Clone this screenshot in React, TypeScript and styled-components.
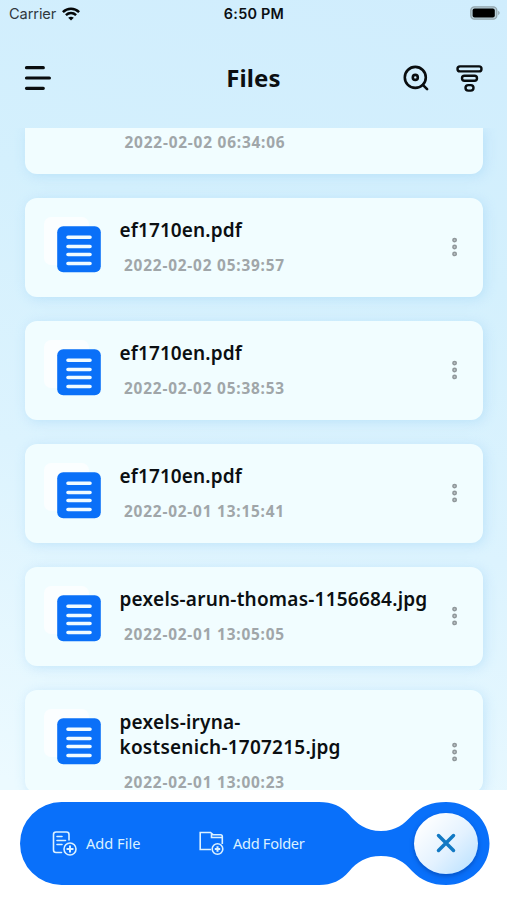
import React from "react";
import styled, { createGlobalStyle } from "styled-components";

const GlobalStyle = createGlobalStyle`
  * { box-sizing: border-box; }
  body { margin: 0; font-family: "Noto Sans", "Open Sans", sans-serif; color: #0b0f12; }
  button { border: 0; padding: 0; background: none; color: inherit; font: inherit; }
  svg { display: block; }
`;

const Screen = styled.div`
  width: 507px;
  height: 900px;
  display: flex;
  flex-direction: column;
  overflow: hidden;
  background: linear-gradient(194deg, #d0edfd 0%, #d4f0fd 28%, #dcf3fe 55%, #ecfaff 88%);
`;

const StatusBar = styled.div`
  height: 28px;
  flex: none;
  display: grid;
  grid-template-columns: 1fr auto 1fr;
  align-items: center;
  padding: 0 7px 0 9px;
  font-family: Inter, sans-serif;
  font-size: 14.6px;
  line-height: 28px;
`;

const Carrier = styled.div`
  display: flex;
  align-items: center;
  gap: 6px;
  margin-top: -1px;
  letter-spacing: -0.1px;
  color: #30383d;
`;

const Clock = styled.div`
  margin-left: -1px;
  font-weight: 600;
  font-size: 14.4px;
  letter-spacing: 0.25px;
`;

const BatterySlot = styled.div`
  display: flex;
  justify-content: flex-end;
  margin-top: -2px;
`;

const Header = styled.header`
  height: 100px;
  flex: none;
  display: grid;
  grid-template-columns: 1fr auto 1fr;
  align-items: center;
  padding: 0 24px 0 24px;
`;

const Title = styled.h1`
  margin: 0;
  font-size: 24px;
  font-weight: 700;
  line-height: 32px;
  letter-spacing: 0.1px;
`;

const Actions = styled.div`
  display: flex;
  justify-content: flex-end;
  gap: 27px;
`;

const List = styled.main`
  flex: none;
  height: 662px;
  overflow: hidden;
  padding: 0 24.5px 0 25px;
`;

const Rows = styled.div`
  display: flex;
  flex-direction: column;
  gap: 24.5px;
`;

const Card = styled.article<{ $partial?: boolean }>`
  flex: none;
  height: ${(p) => (p.$partial ? "45.5px" : "auto")};
  min-height: ${(p) => (p.$partial ? "0" : "98.5px")};
  display: flex;
  align-items: flex-start;
  padding: ${(p) => (p.$partial ? "4px 23px 0 95px" : "19px 23px 0 19px")};
  border-radius: ${(p) => (p.$partial ? "0 0 12px 12px" : "12px")};
  background: #f1fdff;
  box-shadow: 2px 2px 12px rgba(150, 208, 246, 0.42);
`;

const Details = styled.div`
  flex: 1;
  min-width: 0;
  margin: 1px 0 0 17.5px;
`;

const FileName = styled.div<{ $spacing: number }>`
  font-size: 19px;
  font-weight: 600;
  line-height: 25px;
  white-space: pre-line;
  letter-spacing: ${(p) => p.$spacing}px;
`;

const Stamp = styled.div`
  margin-left: 4.5px;
  font-size: 15.4px;
  font-weight: 700;
  line-height: 21px;
  letter-spacing: 0.8px;
  color: #a0a6a9;

  ${FileName} + & {
    margin-top: 12px;
  }
`;

const MoreButton = styled.button<{ $tall?: boolean }>`
  margin-top: ${(p) => (p.$tall ? 33 : 20)}px;
`;

const Footer = styled.footer`
  flex: 1;
  display: grid;
  padding: 12px 17px 15px 20px;
  background: #fff;
`;

const BarShape = styled.svg`
  grid-area: 1 / 1;
`;

const BarContent = styled.div`
  grid-area: 1 / 1;
  z-index: 1;
  height: 83px;
  display: flex;
  align-items: center;
  padding-left: 32px;
`;

const AddButton = styled.button<{ $width: number; $spacing: number }>`
  width: ${(p) => p.$width}px;
  flex: none;
  display: flex;
  align-items: center;
  gap: 8px;
  margin-top: -2px;
  color: #dcf1ff;
  font-size: 14.6px;
  line-height: 20px;
  letter-spacing: ${(p) => p.$spacing}px;
  white-space: nowrap;
`;

const CloseButton = styled.button`
  width: 64px;
  height: 61px;
  flex: none;
  display: grid;
  place-items: center;
  margin-left: -0.5px;
  margin-top: -1px;
  border-radius: 50%;
  background: linear-gradient(135deg, #ffffff 12%, #e4f2ff 55%, #b5dfff 100%);
  box-shadow: 0 2px 4px rgba(0, 50, 140, 0.5);
`;

const FileIcon = () => (
  <svg width="58" height="56" viewBox="0 0 58 56">
    <rect x="0" y="0" width="45" height="48" rx="7" fill="#fbfeff" />
    <rect x="13.2" y="9.2" width="43.6" height="46" rx="6" fill="#0a70f8" />
    <path d="M24 20.2h22M24 29.5h22M24 37.5h22M24 46.5h22" stroke="#f1fbff" strokeWidth="3.6" strokeLinecap="round" />
  </svg>
);

const MoreIcon = () => (
  <svg width="10" height="20" viewBox="0 0 10 20" fill="#bcc3c6" stroke="#8f979a" strokeWidth="1.5">
    <circle cx="4.6" cy="3.1" r="1.7" />
    <circle cx="4.6" cy="10" r="1.7" />
    <circle cx="4.6" cy="16.9" r="1.7" />
  </svg>
);

const files = [
  { name: "ef1710en.pdf", date: "2022-02-02 05:39:57", spacing: 0.12 },
  { name: "ef1710en.pdf", date: "2022-02-02 05:38:53", spacing: 0.12 },
  { name: "ef1710en.pdf", date: "2022-02-01 13:15:41", spacing: 0.12 },
  { name: "pexels-arun-thomas-1156684.jpg", date: "2022-02-01 13:05:05", spacing: 0.22 },
  { name: "pexels-iryna-\nkostsenich-1707215.jpg", date: "2022-02-01 13:00:23", spacing: 0.23, tall: true },
];

export default function App() {
  return (
    <>
      <GlobalStyle />
      <Screen>
        <StatusBar>
          <Carrier>
            Carrier
            <svg width="18" height="14" viewBox="0 0 18 14" fill="none" stroke="#050708" strokeWidth="2.5">
              <path d="M.9 5.2C5.5.7 12.5.7 17.1 5.2M3.9 8.2c3-2.8 7.2-2.8 10.2 0" />
              <path d="M9 13.6 6.2 10.8q2.8-2.2 5.6 0Z" fill="#050708" stroke="none" />
            </svg>
          </Carrier>
          <Clock>6:50 PM</Clock>
          <BatterySlot>
            <svg width="30" height="14" viewBox="0 0 30 14">
              <rect x=".8" y=".8" width="26" height="12.4" rx="3.6" fill="#b9d0da" stroke="#93a5ad" strokeWidth="1.3" />
              <rect x="2.6" y="2.4" width="22.2" height="9.2" rx="2" fill="#000" />
              <path d="M28.2 4.8q3 2.2 0 4.4Z" fill="#93a5ad" />
            </svg>
          </BatterySlot>
        </StatusBar>
        <Header>
          <svg width="27" height="26" viewBox="0 0 27 26" stroke="#090d0f" strokeWidth="3.2" strokeLinecap="round">
            <path d="M2.5 2.7H19.3M2.5 13H25.4M2.5 23.3H19.3" />
          </svg>
          <Title>Files</Title>
          <Actions>
            <svg width="26" height="26" viewBox="0 0 26 26" fill="none" stroke="#090d0f" strokeWidth="2.6" strokeLinecap="round">
              <circle cx="12.3" cy="12.4" r="10.5" />
              <circle cx="12.3" cy="12.4" r="2.5" />
              <path d="m19.8 19.9 4.3 4.2" />
            </svg>
            <svg width="27" height="27" viewBox="0 0 27 27" fill="none" stroke="#090d0f" strokeWidth="2.4">
              <rect x="1.5" y="1.4" width="24" height="5" rx="2.5" />
              <rect x="6" y="10.8" width="15" height="5" rx="2.5" />
              <rect x="9.5" y="20.1" width="8" height="5.5" rx="2.75" />
            </svg>
          </Actions>
        </Header>
        <List>
          <Rows>
            <Card $partial>
              <Stamp>2022-02-02 06:34:06</Stamp>
            </Card>
            {files.map((f) => (
              <Card key={f.date}>
                <FileIcon />
                <Details>
                  <FileName $spacing={f.spacing}>{f.name}</FileName>
                  <Stamp>{f.date}</Stamp>
                </Details>
                <MoreButton $tall={f.tall} aria-label="More"><MoreIcon /></MoreButton>
              </Card>
            ))}
          </Rows>
        </List>
        <Footer>
          <BarShape width="470" height="83" viewBox="0 0 470 83">
            <path
              fill="#0970fa"
              d="M41.5 0H299C312 0 321 4 329 12.5C337 22 346 29 361 29C376 29 384 22 392 13.5C401 4 412 0 426 0C450 0 469.5 18 469.5 41.5C469.5 65 450 83 426 83C412 83 401 78.5 392 69C384 60 376 54 361 54C346 54 337 60 329 69.5C321 78.5 312 83 299 83H41.5A41.5 41.5 0 0 1 41.5 0Z"
            />
          </BarShape>
          <BarContent>
            <AddButton $width={147} $spacing={0}>
              <svg width="26" height="26" viewBox="0 0 26 26" fill="none" stroke="#dcf1ff" strokeWidth="1.6" strokeLinecap="round">
                <path d="M9.5 22.5H4Q1.5 22.5 1.5 20V4.5Q1.5 2 4 2H14.5Q17 2 17 4.5V10M5 6.5h5M5 10.5h8.5M5 14.5h5" />
                <circle cx="18" cy="19" r="6" />
                <path d="M18 16.3v5.4M15.3 19h5.4" strokeWidth="2" />
              </svg>
              Add File
            </AddButton>
            <AddButton $width={215} $spacing={-0.3}>
              <svg width="26" height="26" viewBox="0 0 26 26" fill="none" stroke="#dcf1ff" strokeWidth="1.6">
                <path d="M12 19.5H1.2V2.5H11.5L14 4.7H21.5Q23.3 4.7 23.3 6.5V14M12.5 4V7.5H23.3" />
                <circle cx="18.5" cy="19" r="5.3" />
                <path d="M18.5 16.3v5.4M15.8 19h5.4" strokeWidth="2" />
              </svg>
              Add Folder
            </AddButton>
            <CloseButton aria-label="Close">
              <svg width="20" height="20" viewBox="0 0 20 20" stroke="#1279c4" strokeWidth="3.5" strokeLinecap="round">
                <path d="m2.5 2.5 15 15m0-15-15 15" />
              </svg>
            </CloseButton>
          </BarContent>
        </Footer>
      </Screen>
    </>
  );
}
